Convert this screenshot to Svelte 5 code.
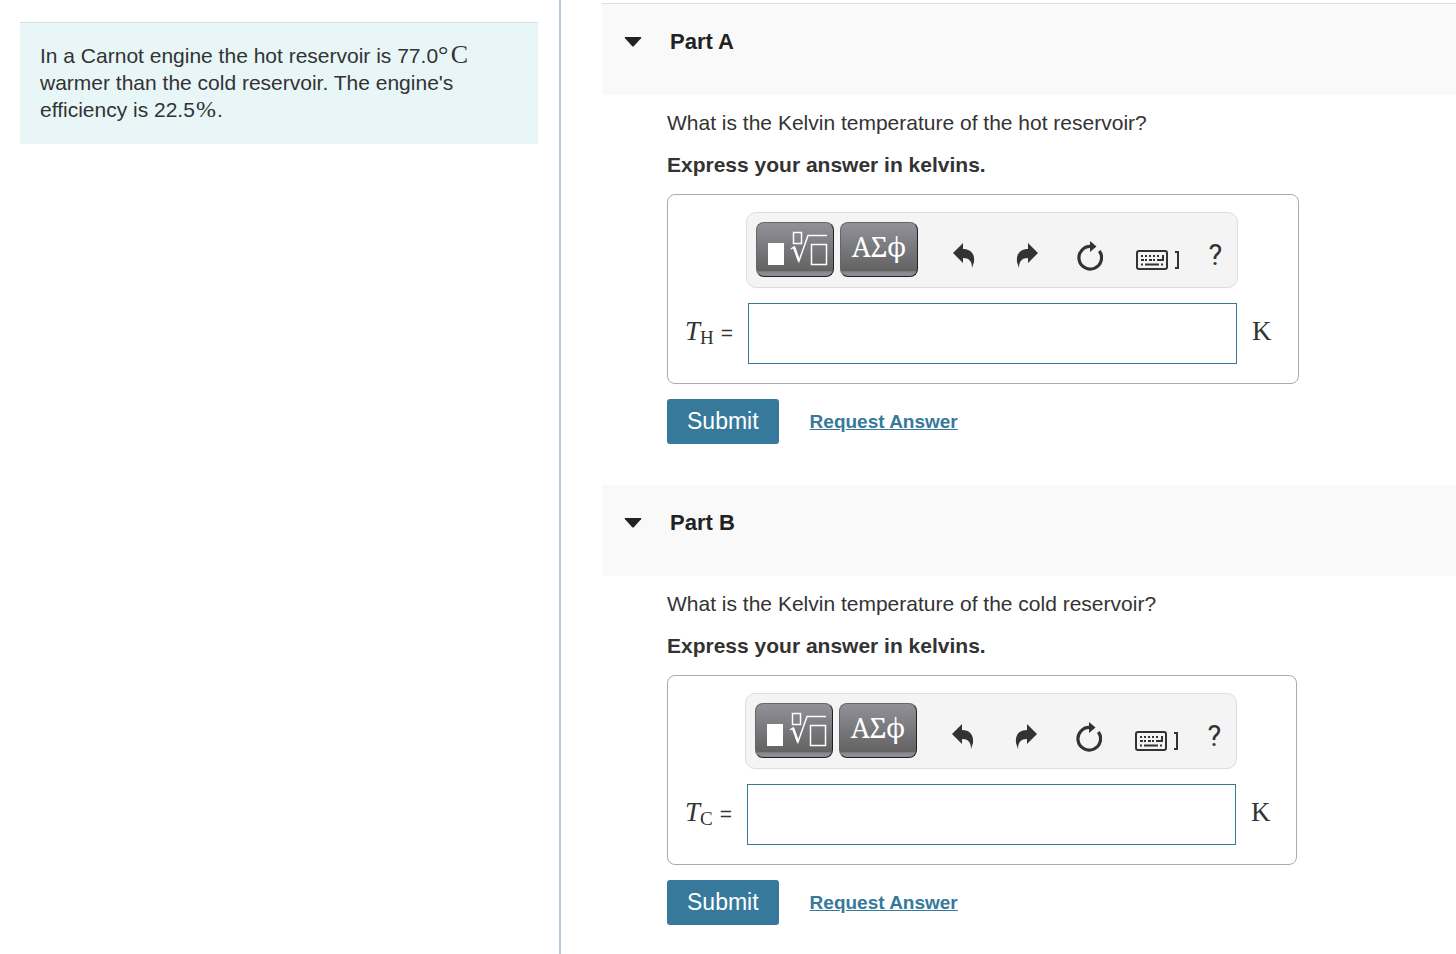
<script lang="ts">
	type Part = {
		id: string;
		title: string;
		question: string;
		subscript: string;
		open: boolean;
		answer: string;
	};

	let parts = $state<Part[]>([
		{
			id: 'a',
			title: 'Part A',
			question: 'What is the Kelvin temperature of the hot reservoir?',
			subscript: 'H',
			open: true,
			answer: ''
		},
		{
			id: 'b',
			title: 'Part B',
			question: 'What is the Kelvin temperature of the cold reservoir?',
			subscript: 'C',
			open: true,
			answer: ''
		}
	]);

	function resetAnswer(part: Part): void {
		part.answer = '';
	}
</script>

{#snippet toolbar(part: Part)}
	<div class="toolbar" role="toolbar" aria-label="Equation editor">
		<button class="key" type="button" aria-label="Templates">
			<svg class="template" width="76" height="53" viewBox="0 0 76 53">
				<path class="solid" d="M11 20h16v22H11z" />
				<path d="M36.5 9.5h8v11h-8z" />
				<path d="M34 26l3-2 5 14L51 12.5h19" />
				<path d="M37 24l5 14" stroke-width="2.5" />
				<path d="M54.5 21.5h15v20h-15z" />
			</svg>
		</button>
		<button class="key greek" type="button" aria-label="Symbols">ΑΣϕ</button>
		<div class="tools">
			<button class="tool" type="button" aria-label="Undo">
				<svg width="22" height="26" viewBox="0 0 22 26">
					<path d="M0 10L10 0v6c7 0 12 4 11 13l-2 6c0-7-3-10-9-10v5z" />
				</svg>
			</button>
			<button class="tool" type="button" aria-label="Redo">
				<svg width="22" height="26" viewBox="0 0 22 26">
					<path d="M22 10L12 0v6C5 6 0 10 1 19l2 6c0-7 3-10 9-10v5z" />
				</svg>
			</button>
			<button class="tool" type="button" aria-label="Reset" onclick={() => resetAnswer(part)}>
				<svg width="26" height="30" viewBox="0 0 26 30">
					<path d="M14 5.5A11.300 11.300 0 1 0 22.300 10" fill="none" stroke="currentColor" stroke-width="3.200" />
					<path d="M13 0l6.5 5.5L13 11z" />
				</svg>
			</button>
			<button class="tool keyboard" type="button" aria-label="Keyboard shortcuts">
				<svg class="outline" width="44" height="20" viewBox="0 0 44 20">
					<rect x="1" y="1" width="30" height="18" rx="2" />
					<path d="M5 6h20" stroke-dasharray="2 2" />
					<path d="M5 10h20" stroke-dasharray="3 1 2 2" />
					<path d="M27 5v5h-3" />
					<path d="M5 14.5h2M9 14.5h14M25 14.5h2" />
					<path d="M39 2h3v16h-3" />
				</svg>
			</button>
			<button class="tool help" type="button" aria-label="Help">?</button>
		</div>
	</div>
{/snippet}

<main>
	<aside>
		<p class="intro">
			In a Carnot engine the hot reservoir is 77.0<span class="math">°&#8202;C</span> warmer than the cold
			reservoir. The engine's efficiency is 22.5<span class="math percent">%</span>.
		</p>
	</aside>

	<div class="parts">
		{#each parts as part (part.id)}
			<section>
				<h2>
					<button type="button" aria-expanded={part.open} onclick={() => (part.open = !part.open)}>
						<svg class="caret" class:closed={!part.open} width="18" height="10" viewBox="0 0 18 10">
							<path d="M1.5 0h15q1.5 0 .5 1.3L10 9q-1 1-2 0L1 1.3Q0 0 1.5 0z" />
						</svg>
						{part.title}
					</button>
				</h2>
				{#if part.open}
					<form onsubmit={(e) => e.preventDefault()}>
						<p>{part.question}</p>
						<p class="instruction">Express your answer in kelvins.</p>
						<div class="answer">
							{@render toolbar(part)}
							<label for="answer-{part.id}">
								<i>T</i><sub>{part.subscript}</sub><span class="equals">=</span>
							</label>
							<input id="answer-{part.id}" type="text" autocomplete="off" bind:value={part.answer} />
							<span class="unit">K</span>
						</div>
						<div class="actions">
							<button class="submit" type="submit">Submit</button>
							<a href="#request-{part.id}">Request Answer</a>
						</div>
					</form>
				{/if}
			</section>
		{/each}
	</div>
</main>

<style>
	:global(body) {
		background: #fff;
		color: #333;
		font-family: "Liberation Sans", Arial, sans-serif;
		font-size: 21px;
		line-height: 27px;
	}

	main {
		display: grid;
		grid-template-columns: 5fr 8fr;
		min-height: 100vh;
	}

	p {
		margin: 0;
	}

	button {
		border: 0;
		padding: 0;
		font: inherit;
		cursor: pointer;
	}

	svg {
		display: block;
		fill: currentColor;
	}

	aside {
		margin-right: -1px;
		border-right: 2px solid #b8c8dc;
		padding: 22px 21px 22px 20px;
	}

	.intro {
		border-top: 1px solid #d8dcdc;
		background: #e8f6f7;
		padding: 19px 20px 21px;
	}

	.math {
		font-family: "Liberation Serif", serif;
		font-size: 26px;
		line-height: 20px;
	}

	.percent {
		margin: 0 1px;
		font-size: 24px;
	}

	.parts {
		min-width: 0;
		padding: 3px 0 28px 42px;
	}

	section + section {
		margin-top: 41px;
	}

	h2 {
		margin: 0;
		background: #f9f9f9;
		padding: 24px 22px 40px;
		font-size: 22px;
	}

	section:first-child h2 {
		border-top: 1px solid #ddd;
	}

	h2 button {
		display: flex;
		align-items: center;
		gap: 28px;
		background: transparent;
		color: #222;
	}

	.closed {
		transform: rotate(-90deg);
	}

	form {
		padding: 14px 20px 0 65px;
	}

	.instruction {
		margin-top: 15px;
		font-weight: 700;
	}

	.answer {
		display: inline-grid;
		grid-template-columns: auto auto auto;
		align-items: center;
		row-gap: 15px;
		margin-top: 16px;
		border: 1px solid #aaa;
		border-radius: 8px;
		padding: 17px 26px 19px 17px;
		vertical-align: top;
	}

	.toolbar {
		box-sizing: border-box;
		grid-column: 2;
		display: flex;
		gap: 6px;
		width: 492px;
		border: 1px solid #ddd;
		border-radius: 10px;
		background: #f4f4f4;
		padding: 9px 1px 10px 9px;
	}

	.key {
		box-sizing: border-box;
		flex: none;
		width: 78px;
		height: 55px;
		border: 1px solid #66666a;
		border-right-color: #222;
		border-bottom-color: #222;
		border-radius: 8px;
		background: linear-gradient(#929199, #626262 48px, #77777a 48px, #8d8c95 50px);
		color: #fff;
		overflow: hidden;
	}

	.template {
		fill: none;
		stroke: currentColor;
		stroke-width: 1.5px;
	}

	.solid {
		fill: currentColor;
		stroke: none;
	}

	.greek {
		padding-bottom: 6px;
		font-family: "Noto Serif", "Liberation Serif", serif;
		font-size: 27px;
	}

	.tools {
		display: flex;
		flex: 1;
		padding: 12px 0 0 8px;
	}

	.tool {
		display: grid;
		flex: 1 1 63px;
		place-items: center;
		background: transparent;
		color: #333;
	}

	.outline {
		fill: none;
		stroke: currentColor;
		stroke-width: 2px;
	}

	.keyboard {
		flex-basis: 73px;
		padding-top: 8px;
	}

	.help {
		flex-basis: 41px;
		font-family: Roboto, sans-serif;
		font-size: 29px;
	}

	label {
		display: flex;
		grid-column: 1;
		align-items: baseline;
		padding-bottom: 4px;
		font-family: "Liberation Serif", serif;
		font-size: 27px;
	}

	sub {
		position: relative;
		top: 4px;
		font-size: 19px;
		line-height: 20px;
		vertical-align: baseline;
	}

	.equals {
		margin: 0 13px 0 7px;
		font-family: "Liberation Sans", Arial, sans-serif;
		font-size: 21px;
	}

	input {
		box-sizing: border-box;
		width: calc(100% - 3px);
		height: 61px;
		margin-left: 2px;
		border: 1px solid #36799b;
		border-radius: 0;
		background: #fff;
		padding: 0 12px;
		color: #333;
		font: inherit;
	}

	.unit {
		padding: 0 0 4px 14px;
		font-family: "Liberation Serif", serif;
		font-size: 27px;
	}

	.actions {
		display: flex;
		align-items: center;
		gap: 31px;
		margin-top: 15px;
	}

	.submit {
		border-radius: 3px;
		background: #36799b;
		padding: 9px 20px;
		color: #fff;
		font-size: 23px;
	}

	a {
		color: #36799b;
		font-size: 19px;
		font-weight: 700;
	}
</style>
